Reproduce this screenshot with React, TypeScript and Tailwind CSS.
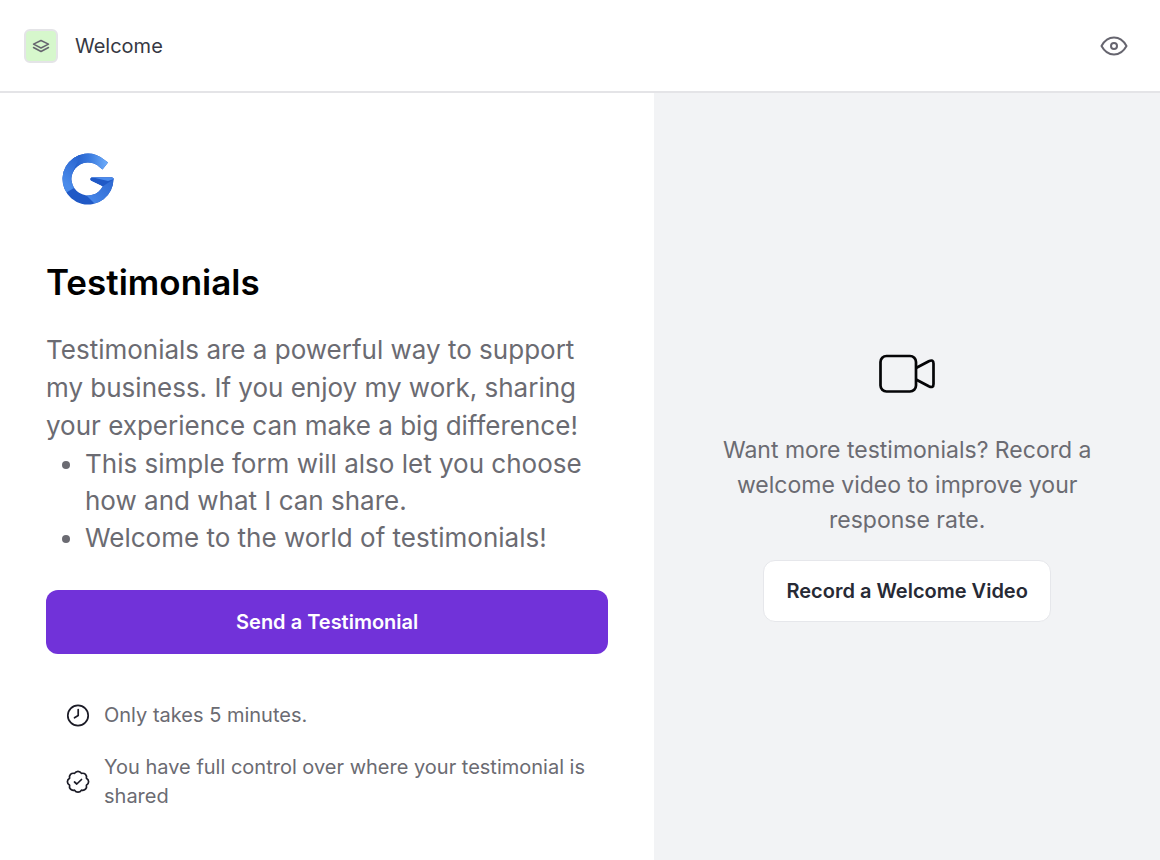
import { ReactNode } from 'react';

const bulletPoints = [
  'This simple form will also let you choose how and what I can share.',
  'Welcome to the world of testimonials!',
];

function LayersIcon() {
  return (
    <svg className="w-5 h-5" viewBox="0 0 20 20" fill="none" stroke="#66656f" strokeWidth="1.5" strokeLinejoin="round" strokeLinecap="round" aria-hidden="true">
      <path d="M10 4.500 L17.500 8.200 L10 12 L2.500 8.200 Z" />
      <path d="M2.500 11.500 L10 15.500 L17.500 11.500" />
    </svg>
  );
}

function EyeIcon() {
  return (
    <svg className="w-7 h-7" viewBox="0 0 28 28" fill="none" stroke="#66656f" strokeWidth="2" strokeLinejoin="round" aria-hidden="true">
      <path d="M1.500 14 C4.500 8.500 9 5.500 14 5.500 S23.500 8.500 26.500 14 C23.500 19.500 19 22.500 14 22.500 S4.500 19.500 1.500 14 Z" />
      <circle cx="14" cy="14" r="3" />
    </svg>
  );
}

function BrandLogo() {
  return (
    <svg className="w-[52px] h-[52px]" viewBox="0 0 52 52" role="img" aria-label="Company logo">
      <defs>
        <linearGradient id="top" x1="0" y1="0" x2="1" y2="0">
          <stop offset="0" stopColor="#2059c6" />
          <stop offset="0.4" stopColor="#3777dc" />
          <stop offset="0.8" stopColor="#68a7f7" />
        </linearGradient>
        <linearGradient id="left" x1="0.7" y1="0" x2="0.4" y2="0.8">
          <stop offset="0" stopColor="#2863cf" />
          <stop offset="1" stopColor="#4a8bea" />
        </linearGradient>
        <linearGradient id="right" x1="0" y1="1" x2="1" y2="0">
          <stop offset="0" stopColor="#4b8ced" />
          <stop offset="1" stopColor="#2c66cf" />
        </linearGradient>
        <clipPath id="ring">
          <path d="M46 9.500 L44 8 A25.500 25.500 0 1 0 51.500 26 Q51.500 24.500 50 24.500 H29.500 Q27.500 25.500 29 27.500 L40.800 33.300 A16.500 16.500 0 1 1 37.700 14.300 L40.500 16.500 Z" />
        </clipPath>
      </defs>
      <g clipPath="url(#ring)">
        <rect width="52" height="52" fill="#2059c6" />
        <path d="M9 0 H52 V18 H34 L22 12 L10 20 Z" fill="url(#top)" />
        <path d="M0 0 H8 L19 2 L12 16 L9 26 L12 35 L0 42 Z" fill="url(#left)" />
        <path d="M24 42 L38 33 L52 25 V52 H34 Z" fill="url(#right)" />
        <path d="M28 24 H52 V26 L40.800 33.300 L28 28 Z" fill="#2059c6" />
        <path d="M29 24 H52 V26 L46 28 Z" fill="#4b8ced" />
      </g>
    </svg>
  );
}

function VideoIcon() {
  return (
    <svg className="w-14 h-10" viewBox="0 0 56 40" fill="none" stroke="#050507" strokeWidth="2.700" strokeLinejoin="round" aria-hidden="true">
      <rect x="1.500" y="2" width="35.500" height="35.500" rx="6" />
      <path d="M37 14 L49.800 7.200 Q54.500 5 54.500 9.500 V30 Q54.500 34.500 49.800 32.300 L37 25.500" />
    </svg>
  );
}

function ClockIcon() {
  return (
    <svg className="w-6 h-6 shrink-0" viewBox="0 0 24 24" fill="none" stroke="#1b1b26" strokeWidth="1.700" strokeLinecap="round" strokeLinejoin="round" aria-hidden="true">
      <circle cx="12" cy="11.500" r="10.200" />
      <path d="M12.200 5.500 V11.500 L8.500 13.800" />
    </svg>
  );
}

function BadgeIcon() {
  return (
    <svg className="w-6 h-6 shrink-0" viewBox="0 0 24 24" fill="none" stroke="#1b1b26" strokeWidth="1.700" strokeLinecap="round" strokeLinejoin="round" aria-hidden="true">
      <path d="M12 1.300 Q14.200 1.300 15.500 3.400 Q18 2.900 19.500 4.300 Q21 5.800 20.400 8.300 Q22.600 9.600 22.600 11.700 Q22.600 13.800 20.400 15.200 Q21 17.700 19.500 19.200 Q18 20.700 15.500 20.100 Q14.200 22.200 12 22.200 Q9.800 22.200 8.500 20.100 Q6 20.700 4.500 19.200 Q3 17.700 3.600 15.200 Q1.400 13.800 1.400 11.700 Q1.400 9.600 3.600 8.300 Q3 5.800 4.500 4.300 Q6 2.900 8.500 3.400 Q9.800 1.300 12 1.300 Z" />
      <path d="M8.500 12 L10.800 14 L15.500 9.500" />
    </svg>
  );
}

function Perk({ icon, children }: { icon: ReactNode; children: ReactNode }) {
  return (
    <li className="flex items-center gap-3.5">
      {icon}
      <span>{children}</span>
    </li>
  );
}

export default function App() {
  return (
    <div className="min-h-screen flex flex-col bg-white font-['Inter',sans-serif] text-[#6b6b72]">
      <header className="flex items-center justify-between border-b-2 border-[#e4e4e7] pl-6 pr-8 pt-[29px] pb-7">
        <div className="flex items-center gap-[17px]">
          <div className="w-[34px] h-[34px] flex items-center justify-center rounded-md border-2 border-[#e4e4e7] bg-[#d6f7cc]">
            <LayersIcon />
          </div>
          <h1 className="text-xl text-[#363843]">Welcome</h1>
        </div>
        <button type="button" aria-label="Preview">
          <EyeIcon />
        </button>
      </header>

      <main className="flex-1 grid grid-cols-[22fr_17fr]">
        <section className="px-[46px] pt-15 pb-12">
          <div className="px-4">
            <BrandLogo />
          </div>
          <h2 className="mt-13 text-[35px] leading-[50px] font-semibold text-black">Testimonials</h2>
          <div className="mt-6 text-[26px] leading-[38px]">
            <p>
              Testimonials are a powerful way to support my business. If you enjoy my work, sharing your experience can make a big difference!
            </p>
            <ul className="list-disc pl-[39px] leading-[37px]">
              {bulletPoints.map((point) => (
                <li key={point}>{point}</li>
              ))}
            </ul>
          </div>
          <button type="button" className="mt-[34px] w-full h-16 rounded-xl bg-[#7132d9] text-xl font-semibold text-white">
            Send a Testimonial
          </button>
          <ul className="mt-[47px] px-5 space-y-[23px] text-xl leading-[29px]">
            <Perk icon={<ClockIcon />}>Only takes 5 minutes.</Perk>
            <Perk icon={<BadgeIcon />}>You have full control over where your testimonial is shared</Perk>
          </ul>
        </section>

        <aside className="flex flex-col items-center justify-center bg-[#f2f3f5] px-15 pt-[22px] text-center">
          <VideoIcon />
          <p className="mt-[39px] text-[23px] leading-[35px]">
            Want more testimonials? Record a welcome video to improve your response rate.
          </p>
          <button type="button" className="mt-[22px] h-[62px] px-[22px] rounded-xl border border-[#e6e7eb] bg-white text-xl font-semibold text-[#272a35]">
            Record a Welcome Video
          </button>
        </aside>
      </main>
    </div>
  );
}
